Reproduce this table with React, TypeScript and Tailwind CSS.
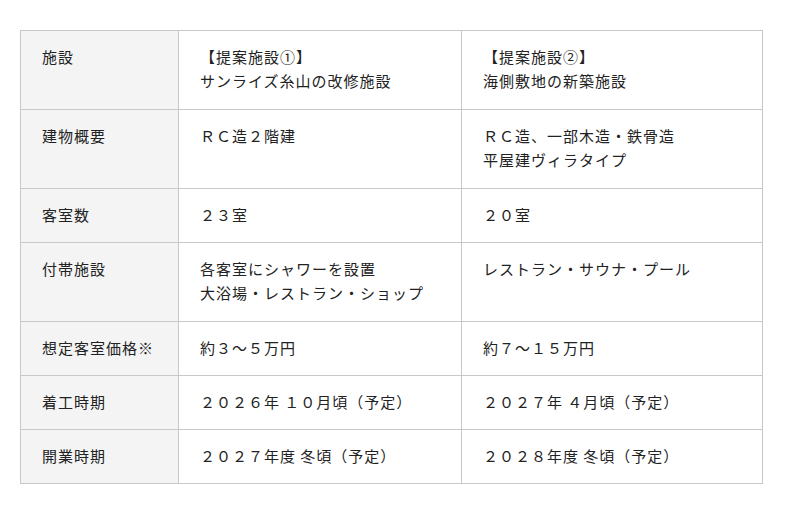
const ROWS: { label: string; a: string[]; b: string[] }[] = [
  { label: '施設', a: ['【提案施設①】', 'サンライズ糸山の改修施設'], b: ['【提案施設②】', '海側敷地の新築施設'] },
  { label: '建物概要', a: ['ＲＣ造２階建'], b: ['ＲＣ造、一部木造・鉄骨造', '平屋建ヴィラタイプ'] },
  { label: '客室数', a: ['２３室'], b: ['２０室'] },
  { label: '付帯施設', a: ['各客室にシャワーを設置', '大浴場・レストラン・ショップ'], b: ['レストラン・サウナ・プール'] },
  { label: '想定客室価格※', a: ['約３～５万円'], b: ['約７～１５万円'] },
  { label: '着工時期', a: ['２０２６年 １０月頃（予定）'], b: ['２０２７年 ４月頃（予定）'] },
  { label: '開業時期', a: ['２０２７年度 冬頃（予定）'], b: ['２０２８年度 冬頃（予定）'] },
];

function Lines({ lines }: { lines: string[] }) {
  return (
    <>
      {lines.map((line, i) => (
        <div key={i}>{line}</div>
      ))}
    </>
  );
}

export default function App() {
  return (
    <div className="min-h-[514px] w-[800px] bg-white pl-[20px] pt-[30px] font-['Noto_Sans_CJK_JP',sans-serif] text-[15px] leading-[24px] tracking-[1px] text-[#222]">
      <table className="w-[742px] table-fixed border-collapse">
        <colgroup>
          <col className="w-[158px]" />
          <col className="w-[283px]" />
          <col className="w-[301px]" />
        </colgroup>
        <tbody>
          {ROWS.map((row) => {
            const tall = row.a.length > 1 || row.b.length > 1;
            return (
              <tr key={row.label} className={tall ? 'h-[79px]' : 'h-[54px]'}>
                <td className="border border-[#c8c8c8] bg-[#f4f4f4] px-[21px] pt-[14px] pb-[15px] align-top">
                  {row.label}
                </td>
                <td className="border border-[#c8c8c8] px-[21px] pt-[14px] pb-[15px] align-top">
                  <Lines lines={row.a} />
                </td>
                <td className="border border-[#c8c8c8] px-[21px] pt-[14px] pb-[15px] align-top">
                  <Lines lines={row.b} />
                </td>
              </tr>
            );
          })}
        </tbody>
      </table>
    </div>
  );
}
